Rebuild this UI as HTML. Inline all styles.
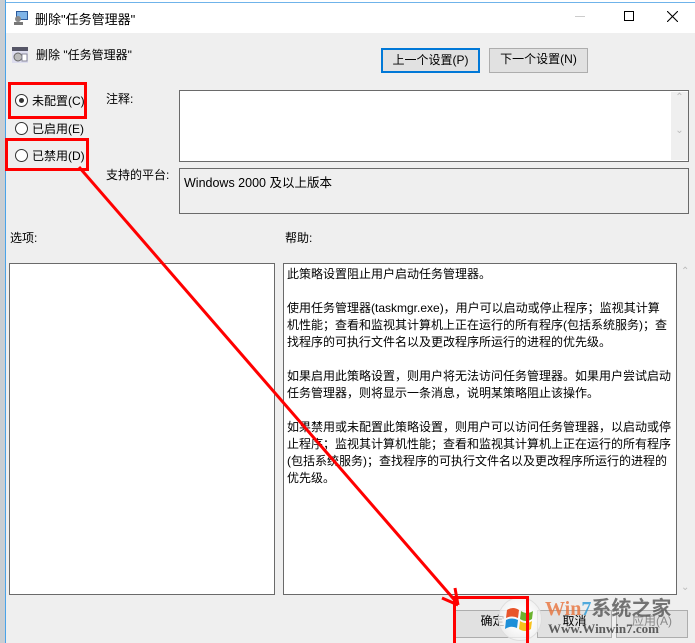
<!DOCTYPE html>
<html><head><meta charset="utf-8"><style>
*{box-sizing:border-box;margin:0;padding:0}
html,body{width:695px;height:643px;overflow:hidden}
body{position:relative;background:#efefef;font-family:"Liberation Sans","Noto Sans CJK SC",sans-serif;font-size:12px;color:#000}
.a{position:absolute}
.box{position:absolute;border:1px solid #6a6a6a;background:#fff}
.btn{position:absolute;border:1px solid #adadad;background:#e1e1e1;text-align:center;line-height:21px;font-size:12px}
.rb{position:absolute;width:13px;height:13px;border:1px solid #333;border-radius:50%;background:#fff}
.red{position:absolute;border:3px solid #f00}
.help p{line-height:17px;margin-bottom:17px;white-space:nowrap}
</style></head><body>
<div class="a" style="left:0;top:0;width:5px;height:643px;background:#c9ced3"></div>
<div class="a" style="left:5px;top:0;width:1px;height:643px;background:#4aa3e8"></div>
<div class="a" style="left:6px;top:0;width:689px;height:33px;background:#fff"></div>
<div class="a" style="left:6px;top:2px;width:689px;height:1px;background:#6fb3ea"></div>
<svg class="a" style="left:13px;top:10px" width="16" height="16"><rect x="3" y="1" width="12" height="9" fill="#2b5a9c"/><rect x="4" y="2" width="10" height="7" fill="#7fb4e8"/><circle cx="5" cy="9" r="3" fill="#888"/><rect x="1" y="12" width="9" height="3" fill="#777"/></svg>
<div class="a" style="left:35px;top:9px;font-size:13px">删除"任务管理器"</div>
<div class="a" style="left:575px;top:16px;width:10px;height:1px;background:#ccc"></div>
<div class="a" style="left:624px;top:11px;width:10px;height:10px;border:1px solid #000"></div>
<svg class="a" style="left:667px;top:11px" width="11" height="11"><path d="M0 0L11 11M11 0L0 11" stroke="#000" stroke-width="1.1"/></svg>
<svg class="a" style="left:12px;top:47px" width="16" height="16"><rect x="0" y="0" width="16" height="16" fill="#dde"/><rect x="0" y="0" width="16" height="4" fill="#556"/><circle cx="6" cy="10" r="4" fill="#bbb" stroke="#666"/><rect x="10" y="7" width="5" height="7" fill="#fff" stroke="#889"/></svg>
<div class="a" style="left:36px;top:46px;font-size:12px">删除 "任务管理器"</div>
<div class="btn" style="left:381px;top:48px;width:99px;height:25px;border:2px solid #0078d7">上一个设置(P)</div>
<div class="btn" style="left:489px;top:48px;width:99px;height:25px">下一个设置(N)</div>
<div class="rb" style="left:15px;top:94px"></div><div class="a" style="left:19px;top:98px;width:5px;height:5px;border-radius:50%;background:#333"></div>
<div class="a" style="left:32px;top:92px">未配置(C)</div>
<div class="rb" style="left:15px;top:122px"></div><div class="a" style="left:32px;top:120px">已启用(E)</div>
<div class="rb" style="left:15px;top:149px"></div><div class="a" style="left:32px;top:147px">已禁用(D)</div>
<div class="a" style="left:106px;top:90px">注释:</div>
<div class="box" style="left:179px;top:90px;width:510px;height:72px"></div>
<div class="a" style="left:671px;top:92px;width:17px;height:68px;background:#efefef;color:#bbb;font-size:10px;text-align:center">⌃<br><br><br>⌄</div>
<div class="a" style="left:106px;top:166px">支持的平台:</div>
<div class="box" style="left:179px;top:168px;width:510px;height:46px;background:#efefef"><div style="padding:3px 4px;font-size:12.5px">Windows 2000 及以上版本</div></div>
<div class="a" style="left:10px;top:229px">选项:</div>
<div class="a" style="left:285px;top:229px">帮助:</div>
<div class="box" style="left:9px;top:263px;width:266px;height:332px"></div>
<div class="box help" style="left:283px;top:263px;width:394px;height:332px;padding:2px 3px;font-size:12px;overflow:hidden"><p>此策略设置阻止用户启动任务管理器。</p><p>使用任务管理器(taskmgr.exe)，用户可以启动或停止程序；监视其计算<br>机性能；查看和监视其计算机上正在运行的所有程序(包括系统服务)；查<br>找程序的可执行文件名以及更改程序所运行的进程的优先级。</p><p>如果启用此策略设置，则用户将无法访问任务管理器。如果用户尝试启动<br>任务管理器，则将显示一条消息，说明某策略阻止该操作。</p><p>如果禁用或未配置此策略设置，则用户可以访问任务管理器，以启动或停<br>止程序；监视其计算机性能；查看和监视其计算机上正在运行的所有程序<br>(包括系统服务)；查找程序的可执行文件名以及更改程序所运行的进程的<br>优先级。</p></div>
<div class="a" style="left:681px;top:266px;color:#bbb;font-size:10px">⌃</div>
<div class="a" style="left:681px;top:582px;color:#bbb;font-size:10px">⌄</div>
<div class="btn" style="left:455px;top:610px;width:75px;height:28px">确定</div>
<div class="btn" style="left:537px;top:610px;width:75px;height:28px">取消</div>
<div class="btn" style="left:616px;top:610px;width:72px;height:28px;color:#888">应用(A)</div>
<div class="a" style="left:498px;top:597px;width:44px;height:44px;border-radius:50%;background:radial-gradient(circle,rgba(255,255,255,.8) 40%,rgba(230,230,230,.6));border:1px solid #ddd"></div>
<svg class="a" style="left:505px;top:604px" width="30" height="30"><path d="M2 6Q8 2 14 6L13 14Q7 11 1 14Z" fill="#e8542a"/><path d="M16 7Q22 11 28 7L27 15Q21 19 15 15Z" fill="#6bb32f"/><path d="M1 16Q7 13 13 16L12 24Q6 21 0 25Z" fill="#1d8fd8"/><path d="M15 17Q21 21 27 17L26 25Q20 29 14 25Z" fill="#f8c21c"/></svg>
<div class="a" style="left:545px;top:596px;white-space:nowrap;font-size:20px;line-height:22px;font-weight:bold;color:#e8723a;font-family:'Liberation Serif',serif;opacity:.8">Win<span style="color:#2a9ad8">7</span><span style="color:#555;font-family:'Noto Sans CJK SC',sans-serif">系统之家</span></div>
<div class="a" style="left:548px;top:621px;white-space:nowrap;font-size:13px;font-weight:bold;color:#444;font-family:'Liberation Serif',serif;opacity:.85">Www.Winwin7.com</div>
<div class="red" style="left:8px;top:82px;width:79px;height:37px"></div>
<div class="red" style="left:5px;top:138px;width:84px;height:33px"></div>
<div class="red" style="left:453px;top:596px;width:76px;height:50px"></div>
<svg class="a" style="left:0;top:0" width="695" height="643"><path d="M79 167L458 604" stroke="#f00" stroke-width="3"/><path d="M458 605L442 598M458 605L455 588" stroke="#f00" stroke-width="3"/></svg>
</body></html>
